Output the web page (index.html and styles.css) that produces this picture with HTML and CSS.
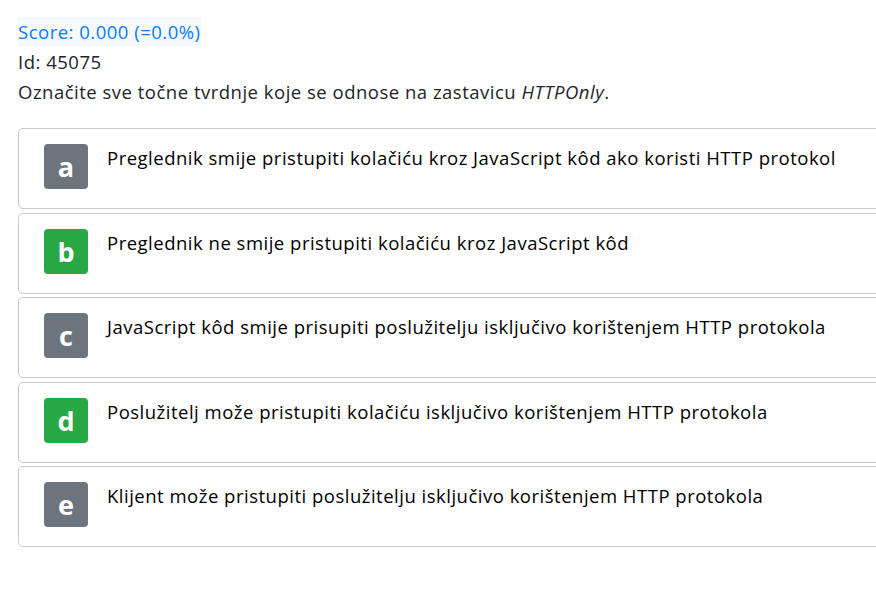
FILE: index.html
```html
<!DOCTYPE html>
<html lang="hr">
<head>
<meta charset="utf-8">
<title>Pitanje 45075</title>
<link rel="stylesheet" href="styles.css">
</head>
<body>
<div class="page">
  <div class="meta">
    <div class="score"><span class="score-tag">Score: 0.000 (=0.0%)</span></div>
    <div class="id">Id: 45075</div>
    <div class="question">Označite sve točne tvrdnje koje se odnose na zastavicu <em>HTTPOnly</em>.</div>
  </div>
  <div class="answers">
    <div class="answer">
      <div class="badge badge-gray">a</div>
      <div class="answer-text">Preglednik smije pristupiti kolačiću kroz JavaScript kôd ako koristi HTTP protokol</div>
    </div>
    <div class="answer">
      <div class="badge badge-green">b</div>
      <div class="answer-text">Preglednik ne smije pristupiti kolačiću kroz JavaScript kôd</div>
    </div>
    <div class="answer">
      <div class="badge badge-gray">c</div>
      <div class="answer-text">JavaScript kôd smije prisupiti poslužitelju isključivo korištenjem HTTP protokola</div>
    </div>
    <div class="answer">
      <div class="badge badge-green">d</div>
      <div class="answer-text">Poslužitelj može pristupiti kolačiću isključivo korištenjem HTTP protokola</div>
    </div>
    <div class="answer">
      <div class="badge badge-gray">e</div>
      <div class="answer-text">Klijent može pristupiti poslužitelju isključivo korištenjem HTTP protokola</div>
    </div>
  </div>
</div>
</body>
</html>
```
FILE: styles.css
```css
html, body {
  margin: 0;
  padding: 0;
  overflow: hidden;
  background: #ffffff;
}

body {
  font-family: "Open Sans", "Noto Sans", sans-serif;
  font-size: 18.5px;
  letter-spacing: 0.5px;
  color: #212529;
}

.page {
  padding: 17px 0 0 18px;
  width: 900px;
}

.meta {
  display: flex;
  flex-direction: column;
}

.score, .id, .question {
  line-height: 30px;
  height: 30px;
}

.score {
  color: #0a7cff;
}

.score-tag {
  background: #f7f9fb;
  padding: 2px 0;
}

.question em {
  font-style: italic;
}

.answers {
  margin-top: 21px;
  display: flex;
  flex-direction: column;
  gap: 3.5px;
}

.answer {
  display: flex;
  align-items: flex-start;
  gap: 19px;
  border: 1px solid #c9c9c9;
  border-radius: 5px;
  padding: 15px 0 19px 25px;
  color: #000;
}

.badge {
  width: 44px;
  height: 45px;
  flex: none;
  border-radius: 4px;
  color: #fff;
  font-weight: 700;
  font-size: 27px;
  letter-spacing: 0;
  line-height: 45px;
  text-align: center;
}

.badge-gray {
  background: #6c757d;
}

.badge-green {
  background: #28a745;
}

.answer-text {
  line-height: 28px;
}
```
